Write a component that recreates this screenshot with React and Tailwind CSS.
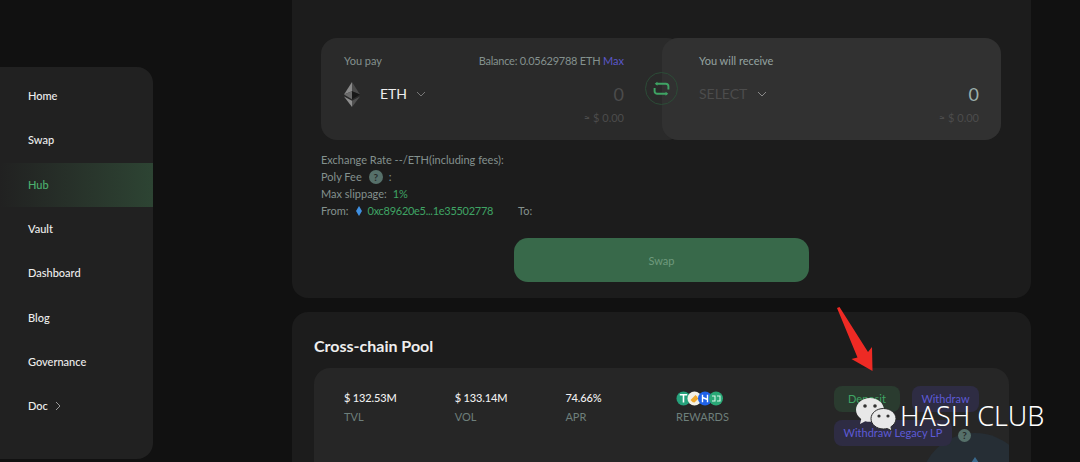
const NAV = ["Home", "Swap", "Hub", "Vault", "Dashboard", "Blog", "Governance", "Doc"];

function Chevron({ className }) {
  return (
    <svg className={className} width="10" height="6" viewBox="0 0 10 6" fill="none" stroke="currentColor" strokeWidth="1">
      <path d="M1 1l4 4 4-4" />
    </svg>
  );
}

function EthLogo() {
  return (
    <svg width="16" height="25" viewBox="0 0 16 25">
      <path d="M8 0L0 12.6 8 9.2z" fill="#8a8a8a" />
      <path d="M8 0l8 12.6L8 9.2z" fill="#4a4a4a" />
      <path d="M0 12.6L8 9.2v8z" fill="#6a6a6a" />
      <path d="M16 12.6L8 9.2v8z" fill="#171717" />
      <path d="M0 14.4L8 25v-6.2z" fill="#8e8e8e" />
      <path d="M16 14.4L8 25v-6.2z" fill="#505050" />
    </svg>
  );
}

function Help({ size = "w-[14px] h-[14px]" }) {
  return (
    <span className={`inline-flex items-center justify-center rounded-full bg-[#56706a] text-[#262b2a] text-[10px] leading-none font-bold ${size}`}>?</span>
  );
}

function Stat({ value, label }) {
  return (
    <div className="w-[110.7px]">
      <div className="text-[11px] leading-[14px] font-medium tracking-[-0.15px] text-[#f0f0f0] h-[14px]">{value}</div>
      <div className="text-[11px] leading-[14px] mt-[5px] text-[#6e7f7b]">{label}</div>
    </div>
  );
}

function Rewards() {
  return (
    <svg width="48" height="15" viewBox="0 0 48 15" className="block">
      <circle cx="7.5" cy="7.5" r="7" fill="#26a17b" />
      <path d="M3.8 3.8h7.4M7.5 3.8v7.6" stroke="#fff" strokeWidth="1.6" fill="none" />
      <circle cx="18.5" cy="7.5" r="7" fill="#f4f1e6" />
      <path d="M14.5 9l5-5 2 2-5 5zM16 11l5-5 1.5 1.5-4 4z" fill="#f0a92c" />
      <circle cx="29" cy="7.5" r="7" fill="#1f62e8" />
      <path d="M26.5 3.8v7.4M31.5 3.8v7.4M26.5 6.5l5 2" stroke="#fff" strokeWidth="1.4" fill="none" />
      <circle cx="40" cy="7.5" r="7" fill="#2aa876" />
      <path d="M36 5h3v5h-3M41 5h3v5h-3" stroke="#d9f5e9" strokeWidth="1.1" fill="none" />
    </svg>
  );
}

export default function App() {
  return (
    <div
      className="relative flex items-start w-[1080px] h-[462px] overflow-hidden bg-[#111111]"
      style={{ fontFamily: "Lato, 'Open Sans', sans-serif" }}
    >
      {/* sidebar */}
      <aside className="w-[153px] h-[392px] mt-[67px] shrink-0 rounded-r-[16px] bg-[#212121] pt-[7px]">
        {NAV.map((n) => (
          <div
            key={n}
            className={`h-[44.33px] pl-[28px] flex items-center gap-[5px] text-[11px] font-medium ${
              n === "Hub"
                ? "text-[#4caf6e] font-bold bg-gradient-to-r from-[#212121] to-[#2d4433]"
                : "text-[#eeeeee]"
            }`}
          >
            {n}
            {n === "Doc" && <Chevron className="-rotate-90 text-[#9a9a9a]" />}
          </div>
        ))}
      </aside>

      {/* main column */}
      <main className="ml-[139px] w-[739px] shrink-0 -mt-[16px] flex flex-col gap-[14px]">
        <section className="h-[314px] rounded-[16px] bg-[#1c1c1c] px-[29px] pt-[54px]">
          <div className="relative flex h-[102px]">
            <div className="w-[362px] h-full rounded-[16px] bg-[#2a2a2a] pl-[23px] pr-[59px] pt-[16px]">
              <div className="flex justify-between text-[11px] leading-[14px] text-[#84918e]">
                <span>You pay</span>
                <span className="tracking-[-0.03px]">
                  <span className="tracking-[-0.25px]">Balance: 0.05629788 ETH</span> <span className="text-[#5b57c9]">Max</span>
                </span>
              </div>
              <div className="flex items-center h-[26px] mt-[13px]">
                <EthLogo />
                <span className="ml-[20px] text-[14px] leading-none text-[#eeeeee]">ETH</span>
                <span className="ml-[9px] text-[#777777]"><Chevron /></span>
                <span className="ml-auto text-[18px] leading-none text-[#4c4c4c]">0</span>
              </div>
              <div className="mt-[4px] text-right text-[11px] leading-[14px] text-[#4c4c4c]">≈ $ 0.00</div>
            </div>
            <div className="w-[339px] -ml-[21px] h-full rounded-[16px] bg-[#313131] pl-[37px] pr-[22px] pt-[16px] z-10">
              <div className="text-[11px] leading-[14px] text-[#95a3a0]">You will receive</div>
              <div className="flex items-center h-[26px] mt-[13px]">
                <span className="text-[14px] leading-none text-[#4c4c4c]">SELECT</span>
                <span className="ml-[10px] text-[#8a8a8a]"><Chevron /></span>
                <span className="ml-auto text-[18px] leading-none text-[#9cb0ac]">0</span>
              </div>
              <div className="mt-[4px] text-right text-[11px] leading-[14px] text-[#4c4c4c]">≈ $ 0.00</div>
            </div>
            {/* swap badge */}
            <div className="absolute left-[324px] top-[34px] z-20 w-[33px] h-[33px] rounded-full border border-[#2c4c37] flex items-center justify-center">
              <svg width="17" height="16" viewBox="0 0 16 15" fill="none" stroke="#3fa464" strokeWidth="1.8">
                <path d="M3 2.5h9a2.5 2.5 0 0 1 2.5 2.5v3" />
                <path d="M13 12H4a2.5 2.5 0 0 1-2.5-2.5V6.5" />
                <path d="M4.2 0.6v3.8L1.6 2.5z" fill="#3fa464" stroke="none" />
                <path d="M11.8 10.1v3.8l2.6-1.9z" fill="#3fa464" stroke="none" />
              </svg>
            </div>
          </div>

          <div className="mt-[11px] text-[11px] leading-[17px] text-[#84918e]">
            <div>Exchange Rate --/ETH(including fees):</div>
            <div className="flex items-center">
              Poly Fee <span className="ml-[7px]"><Help /></span><span className="ml-[6px]">:</span>
            </div>
            <div>
              Max slippage: <span className="ml-[3px] text-[#3fa464]">1%</span>
            </div>
            <div className="flex items-center">
              From:
              <svg className="ml-[7px]" width="6" height="10" viewBox="0 0 6 10">
                <path d="M3 0L0 5l3 5 3-5z" fill="#3f8fe0" />
              </svg>
              <span className="ml-[6px] tracking-[-0.28px] text-[#3fa464]">0xc89620e5...1e35502778</span>
              <span className="ml-[25px]">To:</span>
            </div>
          </div>

          <button className="block ml-[193px] mt-[19px] w-[295px] h-[44px] rounded-[14px] bg-[#38694a] pt-[2px] text-[11px] text-[#6f9a7d]">
            Swap
          </button>
        </section>

        <section className="h-[200px] rounded-[16px] bg-[#1c1c1c] px-[22px] pt-[24px]">
          <h2 className="text-[16px] leading-[20px] font-bold text-[#eeeeee]">Cross-chain Pool</h2>
          <div className="relative mt-[12px] h-[150px] rounded-[16px] bg-[#262626] overflow-hidden pl-[30px] pr-[29px] pt-[18px] flex">
            <div className="flex pt-[5px]">
              <Stat value="$ 132.53M" label="TVL" />
              <Stat value="$ 133.14M" label="VOL" />
              <Stat value="74.66%" label="APR" />
              <div>
                <Rewards />
                <div className="text-[11px] leading-[14px] mt-[4px] text-[#6e7f7b]">REWARDS</div>
              </div>
            </div>
            <div className="relative z-10 ml-auto w-[146px] shrink-0 flex flex-wrap content-start gap-x-[12px] gap-y-[8px]">
              <span className="h-[26px] w-[66px] rounded-[8px] bg-[#2a3b2f] text-[#3fa464] text-[11px] flex items-center justify-center">Deposit</span>
              <span className="h-[26px] w-[67px] rounded-[8px] bg-[#2e2c43] text-[#5d5ad6] text-[11px] flex items-center justify-center">Withdraw</span>
              <span className="h-[26px] w-[118px] rounded-[8px] bg-[#2e2c43] text-[#5d5ad6] text-[11px] flex items-center justify-center">Withdraw Legacy LP</span>
              <span className="self-center -ml-[6px]"><Help size="w-[13px] h-[13px]" /></span>
            </div>
            <div className="absolute left-[606px] top-[65px] w-[110px] h-[110px] rounded-full bg-[#262e35] flex justify-center pt-[24px]">
              <svg width="8" height="6" viewBox="0 0 8 6">
                <path d="M4 0l4 6H0z" fill="#3a6a8e" />
              </svg>
            </div>
          </div>
        </section>
      </main>

      {/* annotation arrow */}
      <svg className="absolute left-[830px] top-[305px] z-20" width="50" height="70" viewBox="0 0 50 70">
        <path d="M7 3L9.5 2 38 47l4-5 .5 24-21-12 6-1.5z" fill="#ee2a24" />
      </svg>

      {/* watermark */}
      <div className="absolute left-[856px] top-[398px] z-20 flex items-center">
        <svg width="40" height="33" viewBox="0 0 40 33">
          <path d="M14 0C6.3 0 0 5.3 0 11.8c0 3.7 2 7 5.2 9.2L4 26l5.3-2.8c1.5.4 3 .6 4.7.6 7.7 0 14-5.3 14-12S21.7 0 14 0z" fill="#e8e8e8" />
          <path d="M27.5 10.5C20.6 10.5 15 15 15 20.7S20.6 31 27.5 31c1.3 0 2.6-.2 3.8-.5L36 33l-1.1-4.2c3-1.9 5.1-4.8 5.1-8.1 0-5.7-5.6-10.2-12.5-10.2z" fill="#e8e8e8" stroke="#2b2b2b" strokeWidth="1" />
          <circle cx="9" cy="8" r="1.8" fill="#333" />
          <circle cx="19" cy="8" r="1.8" fill="#333" />
          <circle cx="23" cy="18" r="1.6" fill="#333" />
          <circle cx="32" cy="18" r="1.6" fill="#333" />
        </svg>
        <span className="ml-[4px] mt-[2px] text-[27px] leading-none text-white whitespace-nowrap" style={{ fontFamily: "'Noto Sans', sans-serif", fontWeight: 300 }}>
          HASH CLUB
        </span>
      </div>
    </div>
  );
}
